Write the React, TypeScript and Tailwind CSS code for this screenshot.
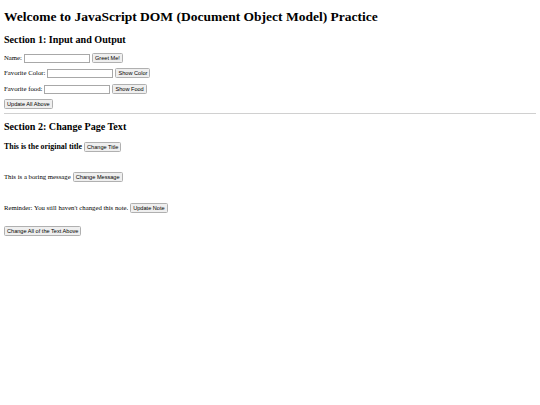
import React from "react";

const serif = "font-['Liberation_Serif',serif]";

function Btn({ children }: { children: React.ReactNode }) {
  return (
    <button className="font-['Liberation_Sans',sans-serif] text-[5.6px] leading-[7px] text-black bg-[#efefef] border border-[#b0b0b0] rounded-[1.5px] px-[2px] h-[9.5px] flex items-center">
      {children}
    </button>
  );
}

function Field() {
  return <input type="text" className="w-[66px] h-[9px] border border-[#a8a8a8] bg-white mx-[2px]" />;
}

export default function App() {
  return (
    <div className={`${serif} text-black bg-white w-[540px] h-[405px] px-[4px] pt-[9px] text-[6.75px] leading-[8px]`}>
      <h1 className="text-[13.5px] leading-[16px] font-bold">
        Welcome to JavaScript DOM (Document Object Model) Practice
      </h1>
      <h2 className="text-[10.1px] leading-[12px] font-bold mt-[9px]">Section 1: Input and Output</h2>
      <div className="mt-[7px] flex items-center h-[10px]">
        <span>Name:</span>
        <Field />
        <Btn>Greet Me!</Btn>
      </div>
      <div className="mt-[5px] flex items-center h-[10px]">
        <span>Favorite Color:</span>
        <Field />
        <Btn>Show Color</Btn>
      </div>
      <div className="mt-[6px] flex items-center h-[10px]">
        <span>Favorite food:</span>
        <Field />
        <Btn>Show Food</Btn>
      </div>
      <div className="mt-[5px] flex items-center h-[10px]">
        <Btn>Update All Above</Btn>
      </div>
      <hr className="mt-[4px] border-t border-[#d0d0d0]" />
      <h2 className="text-[10.1px] leading-[12px] font-bold mt-[7px]">Section 2: Change Page Text</h2>
      <div className="mt-[9px] flex items-center h-[10px] gap-[2px]">
        <span className="font-bold text-[7.9px]">This is the original title</span>
        <Btn>Change Title</Btn>
      </div>
      <div className="mt-[20px] flex items-center h-[10px] gap-[2px]">
        <span>This is a boring message</span>
        <Btn>Change Message</Btn>
      </div>
      <div className="mt-[21px] flex items-center h-[10px] gap-[2px]">
        <span>Reminder: You still haven't changed this note.</span>
        <Btn>Update Note</Btn>
      </div>
      <div className="mt-[13px] flex items-center h-[10px]">
        <Btn>Change All of the Text Above</Btn>
      </div>
    </div>
  );
}
